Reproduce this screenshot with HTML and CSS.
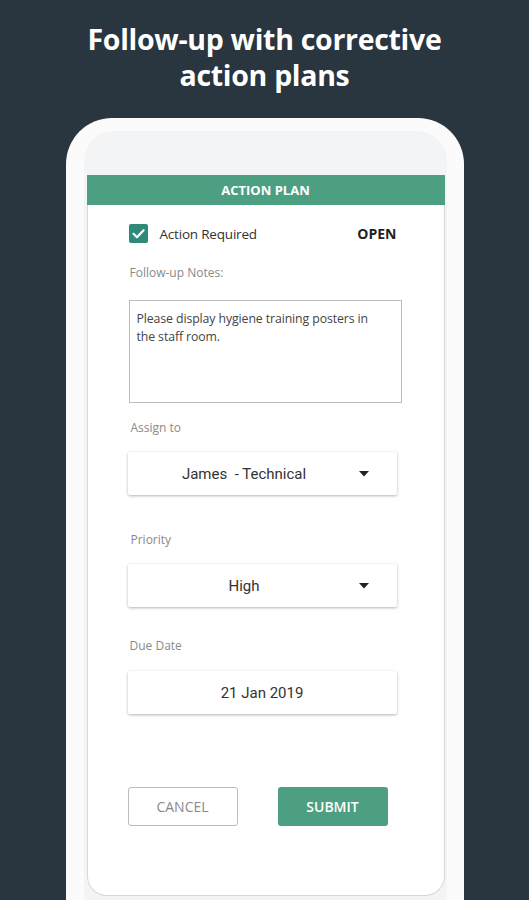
FILE: index.html
```html
<!DOCTYPE html>
<html>
<head>
<meta charset="utf-8">
<link rel="stylesheet" href="styles.css">
</head>
<body>
<div class="page">
  <h1 class="title">Follow-up with corrective<br>action plans</h1>
  <div class="phone">
    <div class="screen">
      <div class="card">
        <div class="card-head">ACTION PLAN</div>
        <div class="card-body">
          <div class="check-row">
            <span class="checkbox">
              <svg width="19" height="19" viewBox="0 0 19 19"><path d="M4.5 9.8 L8 13.2 L14.6 6.2" fill="none" stroke="#fff" stroke-width="2.2" stroke-linecap="round" stroke-linejoin="round"/></svg>
            </span>
            <span class="check-label">Action Required</span>
            <span class="status">OPEN</span>
          </div>
          <div class="label notes-label">Follow-up Notes:</div>
          <div class="notes">Please display hygiene training posters in the staff room.</div>
          <div class="label assign-label">Assign to</div>
          <div class="select">
            <span class="select-value">James &nbsp;- Technical</span>
            <svg class="caret" width="10" height="6" viewBox="0 0 10 6"><path d="M0 0 H10 L5 5.5 Z" fill="#222"/></svg>
          </div>
          <div class="label priority-label">Priority</div>
          <div class="select">
            <span class="select-value">High</span>
            <svg class="caret" width="10" height="6" viewBox="0 0 10 6"><path d="M0 0 H10 L5 5.5 Z" fill="#222"/></svg>
          </div>
          <div class="label due-label">Due Date</div>
          <div class="select date">
            <span class="select-value">21 Jan 2019</span>
          </div>
          <div class="buttons">
            <button class="btn cancel">CANCEL</button>
            <button class="btn submit">SUBMIT</button>
          </div>
        </div>
      </div>
    </div>
  </div>
</div>
</body>
</html>
```

FILE: styles.css
```css
html, body {
  margin: 0;
  padding: 0;
  background: #29353f;
  overflow: hidden;
}
.page {
  width: 529px;
  height: 900px;
  overflow: hidden;
  display: flex;
  flex-direction: column;
  align-items: center;
}
.title {
  margin: 21px 0 0;
  color: #ffffff;
  font-family: "Open Sans", sans-serif;
  font-weight: 700;
  font-size: 28.5px;
  line-height: 36px;
  text-align: center;
  letter-spacing: -0.3px;
}
.phone {
  margin-top: 25px;
  width: 398px;
  height: 800px;
  box-sizing: border-box;
  background: #fbfbfc;
  border-radius: 46px 46px 0 0;
  padding: 13px 17px 0 18px;
}
.screen {
  background: #f2f4f6;
  border-radius: 30px 30px 0 0;
  padding: 44px 2px 0 3px;
  height: 100%;
  box-sizing: border-box;
}
.card {
  background: #ffffff;
  border: 1px solid #d8d8d8;
  border-top: none;
  border-radius: 0 0 20px 20px;
  height: 721px;
  box-sizing: border-box;
  font-family: "Open Sans", sans-serif;
}
.card-head {
  height: 30px;
  margin: 0 -1px;
  background: #4d9f82;
  color: #fff;
  font-weight: 700;
  font-size: 13px;
  line-height: 30px;
  text-align: center;
}
.card-body {
  padding: 0 0 0 40px;
  display: flex;
  flex-direction: column;
  align-items: flex-start;
}
.check-row {
  margin-top: 19px;
  width: 269px;
  height: 19px;
  display: flex;
  align-items: center;
}
.checkbox {
  margin-left: 1px;
  width: 19px;
  height: 19px;
  border-radius: 2px;
  background: #2f8a7b;
  display: flex;
}
.check-label {
  margin-left: 12px;
  font-size: 13.5px;
  color: #333;
  letter-spacing: -0.2px;
}
.status {
  margin-left: auto;
  font-weight: 700;
  font-size: 14px;
  color: #222;
}
.label {
  font-size: 12px;
  color: #8a8a8a;
  line-height: 16px;
  padding-left: 2px;
}
.notes-label { margin-top: 22px; }
.notes {
  margin-top: 19px;
  margin-left: 1px;
  width: 273px;
  height: 103px;
  box-sizing: border-box;
  border: 1px solid #bdbdbd;
  padding: 9px 18px 9px 7px;
  font-size: 12.3px;
  line-height: 18px;
  color: #444;
  letter-spacing: -0.1px;
}
.assign-label { margin-top: 17px; padding-left: 3px; }
.priority-label { margin-top: 37px; padding-left: 3px; }
.due-label { margin-top: 31px; padding-left: 2px; }
.select {
  margin-top: 16px;
  width: 269px;
  height: 43px;
  box-sizing: border-box;
  background: #fff;
  border-radius: 2px;
  box-shadow: 0 1px 3px rgba(0,0,0,0.3);
  position: relative;
  display: flex;
  align-items: center;
  justify-content: center;
}
.due-label + .select { margin-top: 17px; }
.select-value {
  font-family: Roboto, sans-serif;
  font-size: 15px;
  color: #333;
  margin-left: -36px;
}
.date .select-value { margin-left: 0; }
.caret {
  position: absolute;
  right: 28px;
  top: 19px;
}
.buttons {
  margin-top: 73px;
  display: flex;
  gap: 40px;
}
.btn {
  width: 110px;
  height: 39px;
  box-sizing: border-box;
  border-radius: 3px;
  font-family: "Open Sans", sans-serif;
  font-size: 14px;
  padding: 0;
}
.cancel {
  background: #fff;
  border: 1px solid #bcbcbc;
  color: #8a8a8a;
}
.submit {
  background: #4d9f82;
  border: none;
  color: #fff;
  font-weight: 600;
}
```
